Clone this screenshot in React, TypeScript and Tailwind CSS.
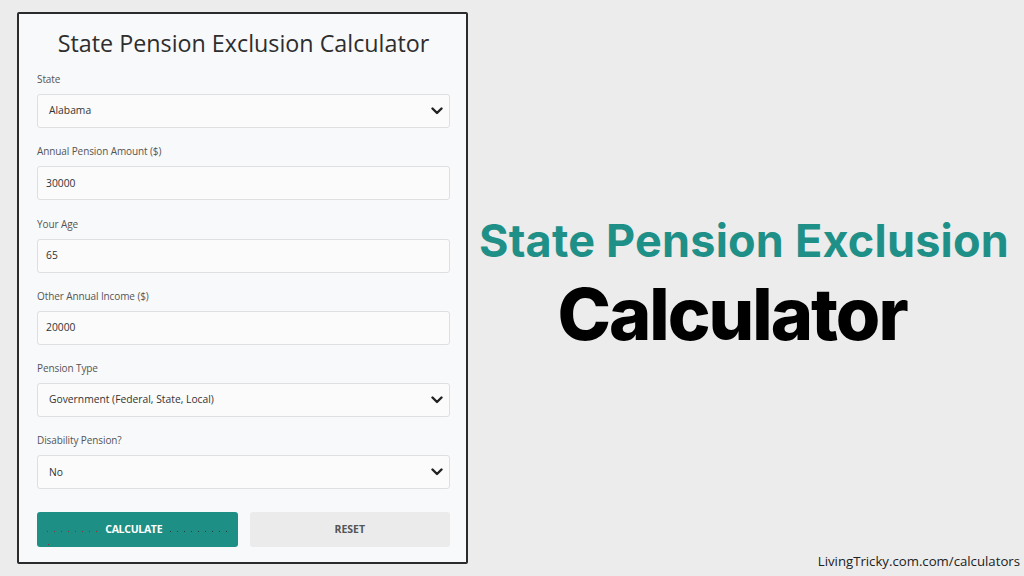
interface FieldProps {
  label: string
  value: string
  select?: boolean
}

function Chevron() {
  return (
    <svg width="12" height="8" viewBox="0 0 12 8" className="text-[#222]">
      <path d="M1.5 1.5 L6 6 L10.5 1.5" fill="none" stroke="currentColor" strokeWidth="2.4" strokeLinecap="round" strokeLinejoin="round" />
    </svg>
  )
}

function Field({ label, value, select }: FieldProps) {
  return (
    <div className="flex flex-col">
      <label className="mb-[7px] h-[15px] text-[10px] leading-[15px] tracking-[-0.1px] text-[#555]">{label}</label>
      <div
        className={`flex h-[34px] items-center justify-between rounded-[3px] border border-[#dedfe1] bg-[#fbfbfc] text-[10.3px] text-[#333] ${
          select ? 'pl-[11px] pr-[6px]' : 'pl-[8px] pr-3'
        }`}
      >
        <span>{value}</span>
        {select && <Chevron />}
      </div>
    </div>
  )
}

function Dots({ count, color }: { count: number; color: string }) {
  return (
    <span className="flex translate-y-[2px] gap-[6px]">
      {Array.from({ length: count }).map((_, i) => (
        <span key={i} className={`h-px w-px ${color}`} />
      ))}
    </span>
  )
}

export default function App() {
  return (
    <div
      className="relative flex h-[576px] w-[1024px] overflow-hidden bg-[#ececec]"
      style={{ fontFamily: '"Open Sans", "Liberation Sans", sans-serif' }}
    >
      <div className="ml-[17px] mt-[12px] flex h-[552px] w-[451px] flex-col rounded-[2px] border-2 border-[#2b2b2b] bg-[#f8f9fa] pl-[18px] pr-[16px] pt-[14px]">
        <h1 className="mb-[14px] text-center text-[23.3px] leading-[30px] text-[#2e2e2e]">
          State Pension Exclusion Calculator
        </h1>
        <div className="flex flex-col gap-[16.25px]">
          <Field label="State" value="Alabama" select />
          <Field label="Annual Pension Amount ($)" value="30000" />
          <Field label="Your Age" value="65" />
          <Field label="Other Annual Income ($)" value="20000" />
          <Field label="Pension Type" value="Government (Federal, State, Local)" select />
          <Field label="Disability Pension?" value="No" select />
        </div>
        <div className="mt-[23px] grid grid-cols-2 gap-[12px]">
          <button
            type="button"
            className="relative flex h-[35px] items-center justify-center gap-[8px] rounded-[3px] bg-[#1d8f85] text-[10.5px] font-bold tracking-[-0.3px] text-white"
          >
            <Dots count={8} color="bg-[#8a2f2f]" />
            CALCULATE
            <Dots count={9} color="bg-[#2a3a38]" />
            <span className="absolute bottom-[2px] left-[11px] h-px w-px bg-[#8a2f2f]" />
          </button>
          <button
            type="button"
            className="flex h-[35px] items-center justify-center rounded-[3px] bg-[#ebebeb] text-[10.5px] font-bold text-[#555]"
          >
            RESET
          </button>
        </div>
      </div>

      <div className="flex flex-1 flex-col items-center pt-[215px]">
        <div
          className="mr-[4px] text-[45px] font-bold leading-[52px] tracking-[0.2px] text-[#1f9088]"
          style={{ fontFamily: 'Inter, "Liberation Sans", sans-serif' }}
        >
          State Pension Exclusion
        </div>
        <div
          className="mr-[28px] mt-[9px] text-[72px] font-extrabold leading-[76px] tracking-[-2px] text-black"
          style={{ fontFamily: 'Inter, "Liberation Sans", sans-serif' }}
        >
          Calculator
        </div>
      </div>

      <div className="absolute bottom-[4px] right-[4px] text-[13.2px] text-[#222]">
        LivingTricky.com.com/calculators
      </div>
    </div>
  )
}
